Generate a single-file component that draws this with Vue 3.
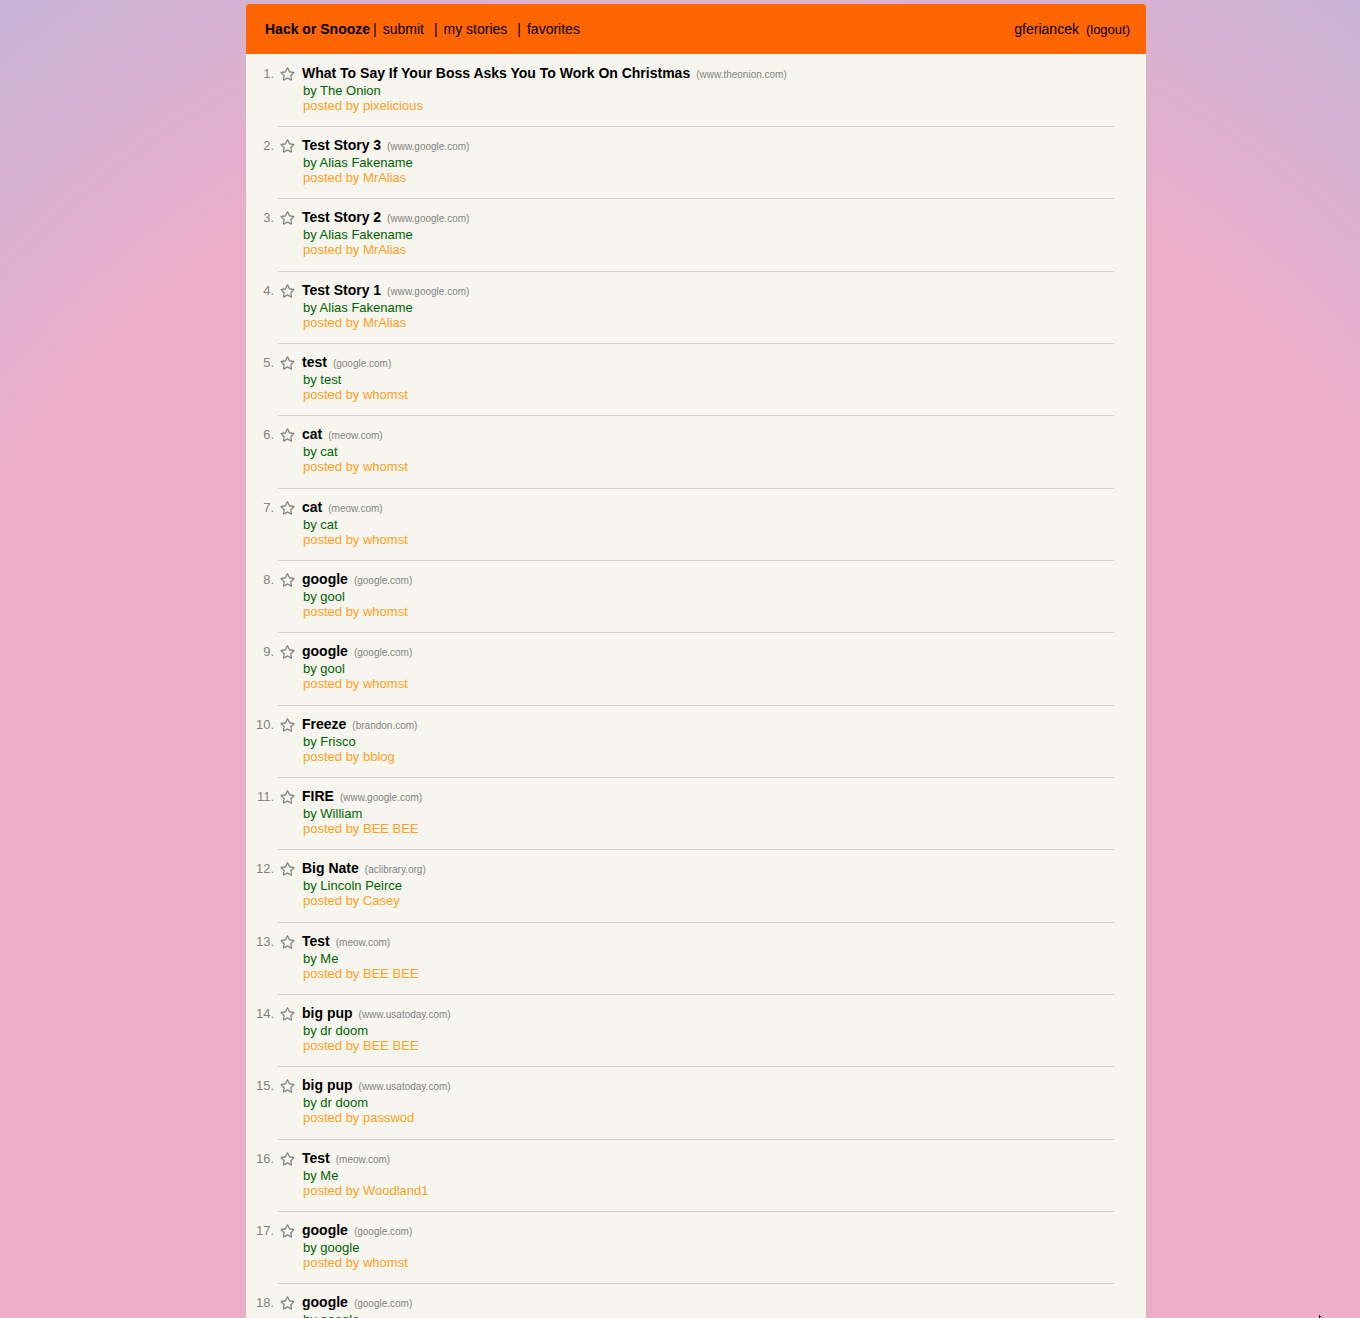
<script setup>
import { ref } from 'vue'

const stories = ref([
  ['What To Say If Your Boss Asks You To Work On Christmas', 'www.theonion.com', 'The Onion', 'pixelicious'],
  ['Test Story 3', 'www.google.com', 'Alias Fakename', 'MrAlias'],
  ['Test Story 2', 'www.google.com', 'Alias Fakename', 'MrAlias'],
  ['Test Story 1', 'www.google.com', 'Alias Fakename', 'MrAlias'],
  ['test', 'google.com', 'test', 'whomst'],
  ['cat', 'meow.com', 'cat', 'whomst'],
  ['cat', 'meow.com', 'cat', 'whomst'],
  ['google', 'google.com', 'gool', 'whomst'],
  ['google', 'google.com', 'gool', 'whomst'],
  ['Freeze', 'brandon.com', 'Frisco', 'bblog'],
  ['FIRE', 'www.google.com', 'William', 'BEE BEE'],
  ['Big Nate', 'aclibrary.org', 'Lincoln Peirce', 'Casey'],
  ['Test', 'meow.com', 'Me', 'BEE BEE'],
  ['big pup', 'www.usatoday.com', 'dr doom', 'BEE BEE'],
  ['big pup', 'www.usatoday.com', 'dr doom', 'passwod'],
  ['Test', 'meow.com', 'Me', 'Woodland1'],
  ['google', 'google.com', 'google', 'whomst'],
  ['google', 'google.com', 'google', 'whomst'],
].map(([title, host, author, user], i) => ({ id: i + 1, title, host, author, user, favorite: false })))
</script>

<template>
  <div class="page">
    <div class="container">
      <header class="navbar">
        <nav class="links">
          <a href="#" class="brand">Hack or Snooze</a>
          <span class="bar">|</span>
          <a href="#submit" class="submit">submit</a>
          <span class="bar">|</span>
          <a href="#my-stories" class="mine">my stories</a>
          <span class="bar">|</span>
          <a href="#favorites">favorites</a>
        </nav>
        <div class="account">
          <a href="#profile">gferiancek</a>
          <button type="button" class="logout">(logout)</button>
        </div>
      </header>
      <ol class="stories">
        <li v-for="s in stories" :key="s.id" class="story">
          <span class="number">{{ s.id }}.</span>
          <button
            type="button"
            class="star"
            :aria-label="'Favorite ' + s.title"
            :aria-pressed="s.favorite"
            @click="s.favorite = !s.favorite"
          >
            <svg viewBox="0 0 576 512" aria-hidden="true">
              <path v-if="s.favorite" d="M259 18 194 150 48 171c-26 4-37 36-18 55l106 103-25 145c-4 26 23 46 46 34l131-69 131 69c23 12 50-8 46-34l-25-145 106-103c19-19 8-51-18-55l-146-21L317 18c-12-24-46-24-58 0z" />
              <path v-else d="M528.100 171.500L382 150.200 316.700 17.800c-11.700-23.600-45.600-23.900-57.400 0L194 150.200 47.900 171.500c-26.200 3.800-36.700 36.100-17.700 54.600l105.700 103-25 145.500c-4.500 26.300 23.200 46 46.400 33.700L288 439.600l130.700 68.700c23.200 12.200 50.900-7.400 46.400-33.700l-25-145.500 105.700-103c19-18.500 8.500-50.800-17.700-54.600zM388.600 312.300l23.700 138.400L288 385.400l-124.300 65.300 23.700-138.400-100.600-98 139-20.200 62.200-126 62.200 126 139 20.200-100.600 98z" />
            </svg>
          </button>
          <div class="body">
            <div class="headline">
              <a href="#" class="title">{{ s.title }}</a>
              <small class="host">({{ s.host }})</small>
            </div>
            <div class="author">by {{ s.author }}</div>
            <div class="user">posted by {{ s.user }}</div>
          </div>
        </li>
      </ol>
    </div>
    <svg class="pointer" viewBox="0 0 4 3" aria-hidden="true">
      <path d="M0 0h1v3H0z" fill="#111" />
      <path d="M1 1h1v1H1z" fill="#333" />
      <path d="M1 2h1v1H1z" fill="#fff" />
      <path d="M2 2h1v1H2z" fill="#474" />
    </svg>
  </div>
</template>

<style>
body {
  margin: 0;
}
</style>

<style scoped>
.page {
  box-sizing: border-box;
  height: 100vh;
  padding: 4px 0 0 32px;
  overflow: hidden auto;
  scrollbar-width: none;
  font-family: Arial, "Liberation Sans", sans-serif;
  font-size: 14px;
  background: radial-gradient(circle 1600px at calc(50% + 16px) 70%, #edaeca 51%, #94bbe9 100%);
}

.container {
  max-width: 900px;
  margin: 0 auto;
  background: #f6f6ef;
  border-radius: 3px 3px 0 0;
}

.navbar {
  display: flex;
  align-items: center;
  justify-content: space-between;
  height: 50px;
  padding: 0 16px 0 19px;
  background: #ff6600;
  border-radius: 3px 3px 0 0;
}

.links {
  display: flex;
  align-items: center;
  gap: 3px;
}

.bar {
  margin-right: 3px;
}

.account {
  display: flex;
  align-items: center;
  gap: 7px;
}

a {
  color: #000;
  text-decoration: none;
}

.brand,
.title {
  font-weight: bold;
}

.submit,
.mine {
  margin-right: 7px;
}

button {
  padding: 0;
  border: 0;
  background: none;
  font-family: inherit;
  cursor: pointer;
}

.logout {
  font-size: 13px;
  color: #000;
}

.stories {
  margin: 0;
  padding: 11px 32px 0 0;
  list-style: none;
}

.story {
  position: relative;
  display: flex;
  align-items: flex-start;
  padding-bottom: 24px;
}

.story:nth-child(3n) {
  padding-bottom: 25px;
}

.story::after {
  content: "";
  position: absolute;
  left: 32px;
  right: 0;
  bottom: 10px;
  height: 1px;
  background: #d0d0d0;
}

.number {
  width: 28px;
  font-size: 13px;
  line-height: 17px;
  text-align: right;
  color: #828282;
}

.star {
  width: 15px;
  height: 17px;
  margin: 0 7px 0 6px;
  color: #828282;
}

.star svg {
  display: block;
  width: 15px;
  height: 14px;
  fill: currentColor;
}

.headline {
  display: flex;
  align-items: baseline;
  gap: 6px;
  line-height: 17px;
}

.host {
  font-size: 10px;
  color: #828282;
}

.author,
.user {
  padding-left: 1px;
  font-size: 13px;
  line-height: 15px;
}

.author {
  color: #006400;
}

.user {
  color: #ffa01e;
}

.pointer {
  position: fixed;
  right: 37px;
  bottom: 0;
  width: 4px;
  height: 3px;
}
</style>
